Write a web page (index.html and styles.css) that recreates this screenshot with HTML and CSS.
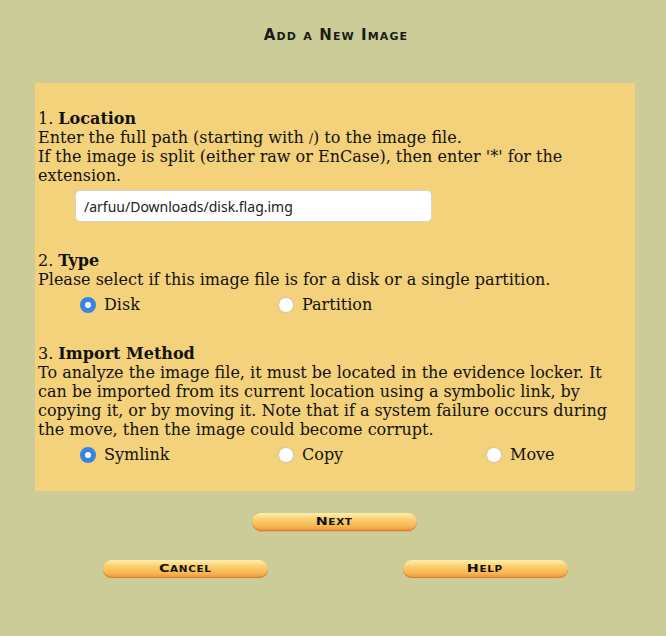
FILE: index.html
```html
<!DOCTYPE html>
<html>
<head>
<meta charset="utf-8">
<title>Add a New Image</title>
<link rel="stylesheet" href="styles.css">
</head>
<body>
  <h1 class="title">Add a New Image</h1>
  <form class="panel">
    <section class="step">
      <div class="line">1. <b>Location</b></div>
      <div class="line">Enter the full path (starting with <span class="mono">/</span>) to the image file.</div>
      <div class="line">If the image is split (either raw or EnCase), then enter '*' for the extension.</div>
      <div class="field"><input class="path" type="text" value="/arfuu/Downloads/disk.flag.img"></div>
    </section>
    <section class="step">
      <div class="line">2. <b>Type</b></div>
      <div class="line">Please select if this image file is for a disk or a single partition.</div>
      <div class="choices">
        <label class="choice"><input type="radio" name="type" checked><span>Disk</span></label>
        <label class="choice"><input type="radio" name="type"><span>Partition</span></label>
      </div>
    </section>
    <section class="step">
      <div class="line">3. <b>Import Method</b></div>
      <div class="line">To analyze the image file, it must be located in the evidence locker. It can be imported from its current location using a symbolic link, by copying it, or by moving it. Note that if a system failure occurs during the move, then the image could become corrupt.</div>
      <div class="choices">
        <label class="choice"><input type="radio" name="imp" checked><span>Symlink</span></label>
        <label class="choice"><input type="radio" name="imp"><span>Copy</span></label>
        <label class="choice"><input type="radio" name="imp"><span>Move</span></label>
      </div>
    </section>
  </form>
  <div class="next-row"><button class="pill" type="button"><span class="lbl">Next</span></button></div>
  <div class="bottom-row">
    <div class="cell"><button class="pill" type="button"><span class="lbl">Cancel</span></button></div>
    <div class="cell"><button class="pill" type="button"><span class="lbl">Help</span></button></div>
  </div>
</body>
</html>
```
FILE: styles.css
```css
html, body {
  margin: 0;
  padding: 0;
  background: #CCCC99;
}
body {
  font-family: "DejaVu Serif", serif;
  font-size: 16px;
  line-height: 19px;
  color: #111;
}
.title {
  margin: 0;
  padding-top: 27px;
  height: 56px;
  box-sizing: border-box;
  text-align: center;
  font-family: "DejaVu Sans", sans-serif;
  font-variant: small-caps;
  font-weight: bold;
  font-size: 15px;
  line-height: 16px;
  letter-spacing: 1.1px;
  color: #1a1a1a;
  padding-left: 6px;
}
.panel {
  width: 600px;
  margin: 27px 0 0 35px;
  background: #F4D27B;
  box-sizing: border-box;
  padding: 26px 3px 27px;
}
.step + .step {
  margin-top: 29px;
}
.step:nth-child(3) {
  margin-top: 30px;
}
.mono {
  font-size: 12px;
  line-height: 0;
}
.field {
  margin: 5px 0 0 37px;
}
.path {
  width: 357px;
  height: 32px;
  box-sizing: border-box;
  border: 1px solid #d6d3cc;
  border-radius: 5px;
  background: #fff;
  padding: 0 8px;
  font-family: "Noto Sans", sans-serif;
  font-size: 14px;
  color: #222;
  outline: none;
}
.choices {
  display: grid;
  grid-template-columns: 198px 208px 1fr;
  padding-left: 42px;
  margin-top: 6px;
}
.choice {
  display: flex;
  align-items: center;
  gap: 8px;
  height: 19px;
}
.choice input {
  appearance: none;
  -webkit-appearance: none;
  width: 16px;
  height: 16px;
  margin: 0;
  border-radius: 50%;
  background: #fff;
  border: 1px solid #c9c4bb;
  box-sizing: border-box;
}
.choice input:checked {
  border: 5px solid #3584e4;
  background: #fff;
}
.next-row {
  display: flex;
  justify-content: center;
  padding-top: 22px;
  padding-left: 2px;
}
.bottom-row {
  width: 600px;
  margin: 29px 0 0 35px;
  display: grid;
  grid-template-columns: 1fr 1fr;
}
.cell {
  display: flex;
  justify-content: center;
}
.pill {
  width: 165px;
  height: 18px;
  padding: 0;
  border: none;
  border-radius: 9px;
  background: linear-gradient(#fff0b0 0%, #fccf6e 35%, #f7b552 75%, #e8923a 100%);
  box-shadow: inset 0 -1px 0 #d98030, 0 1px 0 #e0b070;
  font-family: "DejaVu Sans", sans-serif;
  font-variant: small-caps;
  font-weight: bold;
  font-size: 11px;
  line-height: 18px;
  letter-spacing: 0.5px;
  color: #111;
}
.lbl {
  display: inline-block;
  transform: scaleX(1.3);
}
```
